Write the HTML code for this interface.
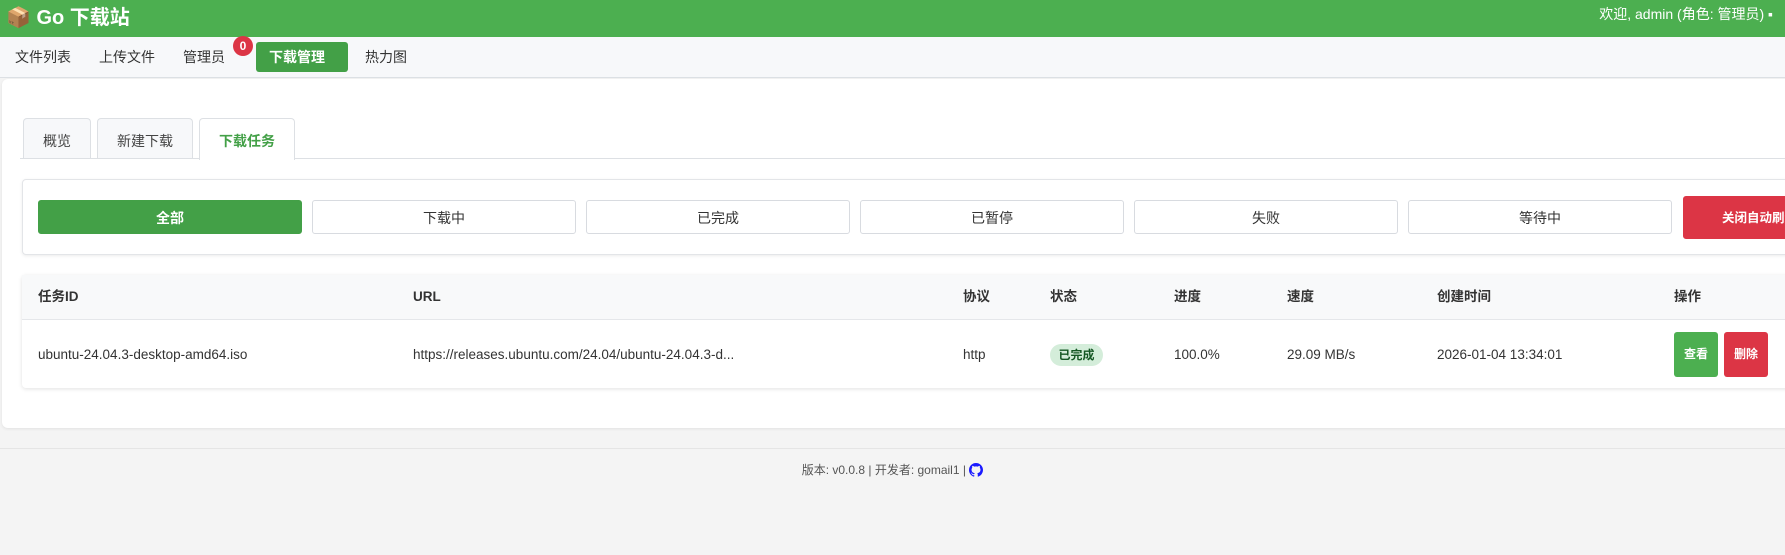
<!DOCTYPE html>
<html><head><meta charset="utf-8"><style>
*{box-sizing:border-box;margin:0;padding:0}
body{width:1785px;height:555px;overflow:hidden;background:#f4f4f4;font-family:"Liberation Sans","Noto Sans CJK SC",sans-serif;color:#333;position:relative}
.hdr{position:absolute;left:0;top:0;width:1785px;height:37px;background:#4caf50;color:#fff}
.logo{position:absolute;left:6px;top:1px;font-size:20px;font-weight:bold}
.user{position:absolute;right:12px;top:4px;font-size:14px}
.nav{position:absolute;top:37px;left:0;width:1785px;height:41px;background:#f7f8fa;border-bottom:1px solid #dde0e4}
.nav span{position:absolute;top:10px;font-size:14px;line-height:20px;color:#333}
.nav .act{left:256px;top:5px;width:92px;height:30px;background:#43a047;color:#fff;font-weight:bold;border-radius:3px;padding:5px 0 0 13px}
.badge{position:absolute;left:233px;top:36px;width:20px;height:20px;border-radius:50%;background:#dc3545;color:#fff;font-size:12px;font-weight:bold;text-align:center;line-height:20px}
.panel{position:absolute;left:2px;top:79px;width:1800px;height:349px;background:#fff;border-radius:6px;box-shadow:0 1px 3px rgba(0,0,0,.08)}
.tab{position:absolute;top:118px;height:41px;border:1px solid #dde0e4;border-bottom:none;border-radius:4px 4px 0 0;background:#f7f8fa;font-size:14px;text-align:center;padding-top:12px;color:#444}
.tline{position:absolute;left:20px;top:158px;width:1780px;border-top:1px solid #dde0e4}
.card{position:absolute;left:22px;top:179px;width:1780px;height:76px;background:#fff;border:1px solid #e3e5e8;border-radius:4px;box-shadow:0 1px 3px rgba(0,0,0,.08)}
.fb{position:absolute;top:200px;height:34px;width:264px;border:1px solid #d8dbe0;border-radius:3px;background:#fff;font-size:14px;text-align:center;padding-top:7px;color:#333}
.tbl{position:absolute;left:22px;top:275px;width:1780px;height:113px;background:#fff;border-radius:4px;box-shadow:0 1px 4px rgba(0,0,0,.12)}
.th{position:absolute;left:0;top:0;width:100%;height:45px;background:#f8f9fa;border-bottom:1px solid #e5e7ea}
.c{position:absolute;font-size:13.5px;line-height:18px}
.h{top:13px;font-weight:bold;color:#333}
.r{top:71px;color:#333}
.ok{position:absolute;left:1028px;top:69px;width:53px;height:22px;border-radius:11px;background:#d4edda;color:#155724;font-size:12px;font-weight:bold;text-align:center;line-height:22px}
.btn{position:absolute;top:57px;width:44px;height:45px;border-radius:3px;color:#fff;font-size:12px;font-weight:bold;text-align:center;line-height:45px}
.foot{position:absolute;left:0;top:448px;width:1785px;border-top:1px solid #e5e5e5;text-align:center;font-size:12px;color:#555;padding-top:12px}
</style></head><body>
<div class="hdr"><div class="logo">📦 Go 下载站</div><div class="user">欢迎, admin (角色: 管理员) ▪</div></div>
<div class="nav">
<span style="left:15px">文件列表</span><span style="left:99px">上传文件</span><span style="left:183px">管理员</span>
<span class="act">下载管理</span><span style="left:365px">热力图</span>
</div>
<div class="badge">0</div>
<div class="panel"></div>
<div class="tab" style="left:23px;width:68px">概览</div>
<div class="tab" style="left:97px;width:96px">新建下载</div>
<div class="tab" style="left:199px;width:96px;background:#fff;color:#43a047;font-weight:bold;height:42px;z-index:2">下载任务</div>
<div class="tline"></div>
<div class="card"></div>
<div class="fb" style="left:38px;background:#43a047;border-color:#43a047;color:#fff;font-weight:bold">全部</div>
<div class="fb" style="left:312px">下载中</div>
<div class="fb" style="left:586px">已完成</div>
<div class="fb" style="left:860px">已暂停</div>
<div class="fb" style="left:1134px">失败</div>
<div class="fb" style="left:1408px">等待中</div>
<div class="fb" style="left:1683px;top:196px;height:43px;width:200px;background:#dc3545;border-color:#dc3545;color:#fff;font-size:12.5px;font-weight:bold;padding:10px 0 0 38px;text-align:left">关闭自动刷新</div>
<div class="tbl">
<div class="th"></div>
<div class="c h" style="left:16px">任务ID</div><div class="c h" style="left:391px">URL</div><div class="c h" style="left:941px">协议</div><div class="c h" style="left:1028px">状态</div><div class="c h" style="left:1152px">进度</div><div class="c h" style="left:1265px">速度</div><div class="c h" style="left:1415px">创建时间</div><div class="c h" style="left:1652px">操作</div>
<div class="c r" style="left:16px">ubuntu-24.04.3-desktop-amd64.iso</div>
<div class="c r" style="left:391px">https://releases.ubuntu.com/24.04/ubuntu-24.04.3-d...</div>
<div class="c r" style="left:941px">http</div>
<div class="ok">已完成</div>
<div class="c r" style="left:1152px">100.0%</div>
<div class="c r" style="left:1265px">29.09 MB/s</div>
<div class="c r" style="left:1415px">2026-01-04 13:34:01</div>
<div class="btn" style="left:1652px;background:#4caf50">查看</div>
<div class="btn" style="left:1702px;background:#dc3545">删除</div>
</div>
<div class="foot">版本: v0.0.8 | 开发者: gomail1 | <svg width="14" height="14" viewBox="0 0 16 16" style="vertical-align:-3px"><path fill="#1a1aff" d="M8 0C3.58 0 0 3.58 0 8c0 3.54 2.29 6.53 5.47 7.59.4.07.55-.17.55-.38v-1.33c-2.23.48-2.7-1.07-2.7-1.07-.36-.92-.89-1.17-.89-1.17-.73-.5.06-.49.06-.49.8.06 1.23.83 1.23.83.72 1.22 1.87.87 2.33.66.07-.52.28-.87.51-1.07-1.78-.2-3.64-.89-3.64-3.95 0-.87.31-1.59.82-2.15-.08-.2-.36-1.02.08-2.12 0 0 .67-.21 2.2.82a7.6 7.6 0 014 0c1.53-1.04 2.2-.82 2.2-.82.44 1.1.16 1.92.08 2.12.51.56.82 1.27.82 2.15 0 3.07-1.87 3.75-3.65 3.95.29.25.54.73.54 1.48v2.2c0 .21.15.46.55.38A8 8 0 0016 8c0-4.42-3.58-8-8-8z"/></svg></div>
</body></html>
